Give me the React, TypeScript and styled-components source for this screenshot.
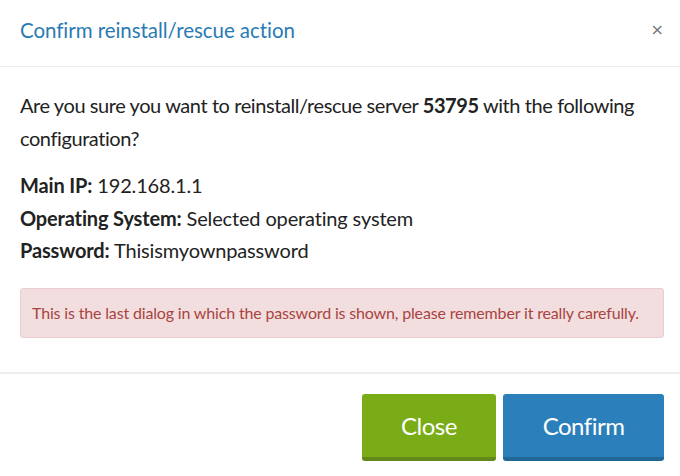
import React from "react";
import styled, { createGlobalStyle } from "styled-components";

const Global = createGlobalStyle`
  html, body { margin: 0; padding: 0; background: #fff; }
  body { font-family: Lato, "Open Sans", sans-serif; color: #222; }
  * { box-sizing: border-box; }
`;

const Dialog = styled.div`
  width: 680px;
  height: 476px;
  display: flex;
  flex-direction: column;
  background: #fff;
`;

const Header = styled.div`
  height: 67px;
  display: flex;
  align-items: center;
  justify-content: space-between;
  padding: 0 16px 7px 20px;
  border-bottom: 1px solid #ececec;
`;

const Title = styled.h4`
  margin: 0;
  font-size: 20.5px;
  font-weight: 400;
  color: #2a7ab3;
  letter-spacing: -0.05px;
`;

const CloseX = styled.button`
  border: 0;
  background: none;
  padding: 0;
  font-family: "DejaVu Sans", sans-serif;
  font-size: 16px;
  color: #777;
  cursor: pointer;
`;

const Body = styled.div`
  padding: 22px 16px 0 20px;
  flex: 1;
  display: flex;
  flex-direction: column;
`;

const Lead = styled.p`
  margin: 0 0 14px;
  font-size: 20px;
  line-height: 33px;
  letter-spacing: -0.42px;
`;

const Info = styled.div`
  font-size: 20px;
  line-height: 32.5px;
  letter-spacing: -0.15px;
`;

const Label = styled.strong`
  font-weight: 700;
`;

const Alert = styled.div`
  margin-top: 21px;
  width: 644px;
  height: 50px;
  display: flex;
  align-items: center;
  padding: 0 11px;
  background: #f2dede;
  border: 1px solid #ebccd1;
  border-radius: 3px;
  color: #a94442;
  font-size: 16px;
  letter-spacing: -0.16px;
  white-space: nowrap;
`;

const Footer = styled.div`
  height: 104px;
  border-top: 2px solid #eeeeee;
  display: flex;
  justify-content: flex-end;
  align-items: flex-start;
  gap: 7px;
  padding: 20px 16px 0 0;
`;

const Button = styled.button<{ $variant: "green" | "blue"; $w: number }>`
  width: ${(p) => p.$w}px;
  height: 67px;
  border: 0;
  border-radius: 3px;
  border-bottom: 4px solid ${(p) => (p.$variant === "green" ? "#62891a" : "#1f6797")};
  background: ${(p) => (p.$variant === "green" ? "#7aac17" : "#2b80bb")};
  color: #fff;
  font-family: Lato, "Open Sans", sans-serif;
  font-size: 24px;
  letter-spacing: -0.5px;
  padding: 0;
  cursor: pointer;
`;

export default function App() {
  return (
    <>
      <Global />
      <Dialog>
        <Header>
          <Title>Confirm reinstall/rescue action</Title>
          <CloseX aria-label="Close">×</CloseX>
        </Header>
        <Body>
          <Lead>
            Are you sure you want to reinstall/rescue server <Label>53795</Label> with the following configuration?
          </Lead>
          <Info>
            <div><Label>Main IP:</Label> 192.168.1.1</div>
            <div><Label>Operating System:</Label> Selected operating system</div>
            <div><Label>Password:</Label> Thisismyownpassword</div>
          </Info>
          <Alert>This is the last dialog in which the password is shown, please remember it really carefully.</Alert>
        </Body>
        <Footer>
          <Button $variant="green" $w={134}>Close</Button>
          <Button $variant="blue" $w={161}>Confirm</Button>
        </Footer>
      </Dialog>
    </>
  );
}
